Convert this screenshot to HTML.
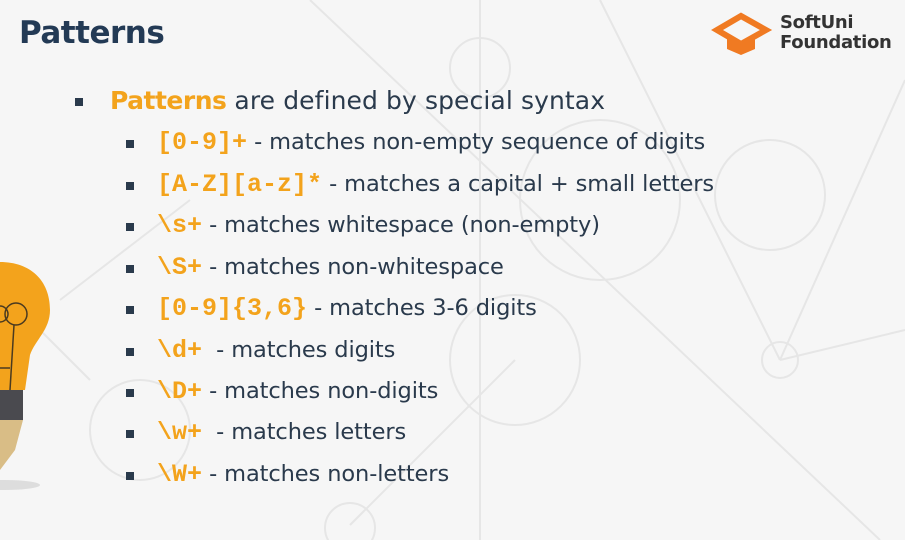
<!DOCTYPE html>
<html><head><meta charset="utf-8"><style>
body{margin:0;width:905px;height:540px;overflow:hidden;background:#f6f6f6;font-family:"DejaVu Sans","Liberation Sans",sans-serif;position:relative}
svg.bg{position:absolute;left:0;top:0}
h1{position:absolute;left:19px;top:15px;margin:0;font-size:31px;font-weight:bold;color:#233a55;letter-spacing:-0.5px}
.l1{position:absolute;left:75px;top:86px;font-size:25px;color:#2a3a4c;white-space:nowrap;letter-spacing:0.1px}
.o{color:#f3a31c;font-weight:bold;letter-spacing:-0.5px}
.m{font-family:"Liberation Mono",monospace;color:#f3a31c;font-weight:bold;font-size:25px;letter-spacing:0}
.sq{display:inline-block;width:8px;height:8px;background:#2a3a4c;position:absolute;left:0;top:12px}
.s{position:absolute;left:126px;font-size:22.5px;color:#2a3a4c;white-space:nowrap;padding-left:31px;letter-spacing:-0.1px}
.logo{position:absolute;left:780px;top:13px;font-family:"DejaVu Sans",sans-serif;font-weight:bold;font-size:18px;line-height:20px;color:#333;letter-spacing:-0.3px}
</style></head><body>
<svg class="bg" width="905" height="540">
<g stroke="#e6e6e6" stroke-width="2" fill="none">
<line x1="480" y1="0" x2="480" y2="540"/><line x1="600" y1="0" x2="780" y2="360"/>
<line x1="310" y1="0" x2="880" y2="540"/><line x1="905" y1="80" x2="780" y2="360"/>
<line x1="60" y1="300" x2="190" y2="200"/><line x1="40" y1="330" x2="90" y2="380"/>
<line x1="780" y1="360" x2="905" y2="330"/><line x1="350" y1="525" x2="515" y2="360"/>
<circle cx="770" cy="195" r="55"/><circle cx="515" cy="360" r="65"/><circle cx="780" cy="360" r="18"/>
<circle cx="350" cy="528" r="25"/><circle cx="480" cy="68" r="30"/><circle cx="140" cy="430" r="50"/><circle cx="600" cy="200" r="80"/>
</g>
<path d="M0 262 C30 262 50 280 50 310 C50 330 35 340 30 355 L25 390 L0 390Z" fill="#f3a31c"/>
<g stroke="#4a3a20" stroke-width="1.5" fill="none"><circle cx="16" cy="314" r="11"/><circle cx="0" cy="314" r="8"/><line x1="14" y1="325" x2="10" y2="390"/><line x1="0" y1="368" x2="10" y2="368"/></g>
<path d="M0 390 L23 390 L23 420 L0 420Z" fill="#4a4a4f"/>
<path d="M0 420 L23 420 L15 450 L0 470Z" fill="#d9bd86"/>
<ellipse cx="5" cy="485" rx="35" ry="5" fill="#ddd"/>
<g fill="#f07a22"><path d="M717 30 L741 16 L766 30 L741 44Z" fill="none" stroke="#f07a22" stroke-width="6"/><path d="M727 37 L727 49 L741 55 L755 49 L755 37 L741 45Z"/></g>
</svg>
<h1>Patterns</h1>
<div class="logo">SoftUni<br>Foundation</div>
<div class="l1"><span class="sq"></span><span style="padding-left:35px"><span class="o">Patterns</span> are defined by special syntax</span></div>
<div class="s" style="top:128px"><span class="sq"></span><span class="m">[0-9]+</span> - matches non-empty sequence of digits</div>
<div class="s" style="top:170px"><span class="sq"></span><span class="m">[A-Z][a-z]*</span> - matches a capital + small letters</div>
<div class="s" style="top:211px"><span class="sq"></span><span class="m">\s+</span> - matches whitespace (non-empty)</div>
<div class="s" style="top:253px"><span class="sq"></span><span class="m">\S+</span> - matches non-whitespace</div>
<div class="s" style="top:294px"><span class="sq"></span><span class="m">[0-9]{3,6}</span> - matches 3-6 digits</div>
<div class="s" style="top:336px"><span class="sq"></span><span class="m">\d+</span>&nbsp; - matches digits</div>
<div class="s" style="top:377px"><span class="sq"></span><span class="m">\D+</span> - matches non-digits</div>
<div class="s" style="top:418px"><span class="sq"></span><span class="m">\w+</span>&nbsp; - matches letters</div>
<div class="s" style="top:460px"><span class="sq"></span><span class="m">\W+</span> - matches non-letters</div>
</body></html>
